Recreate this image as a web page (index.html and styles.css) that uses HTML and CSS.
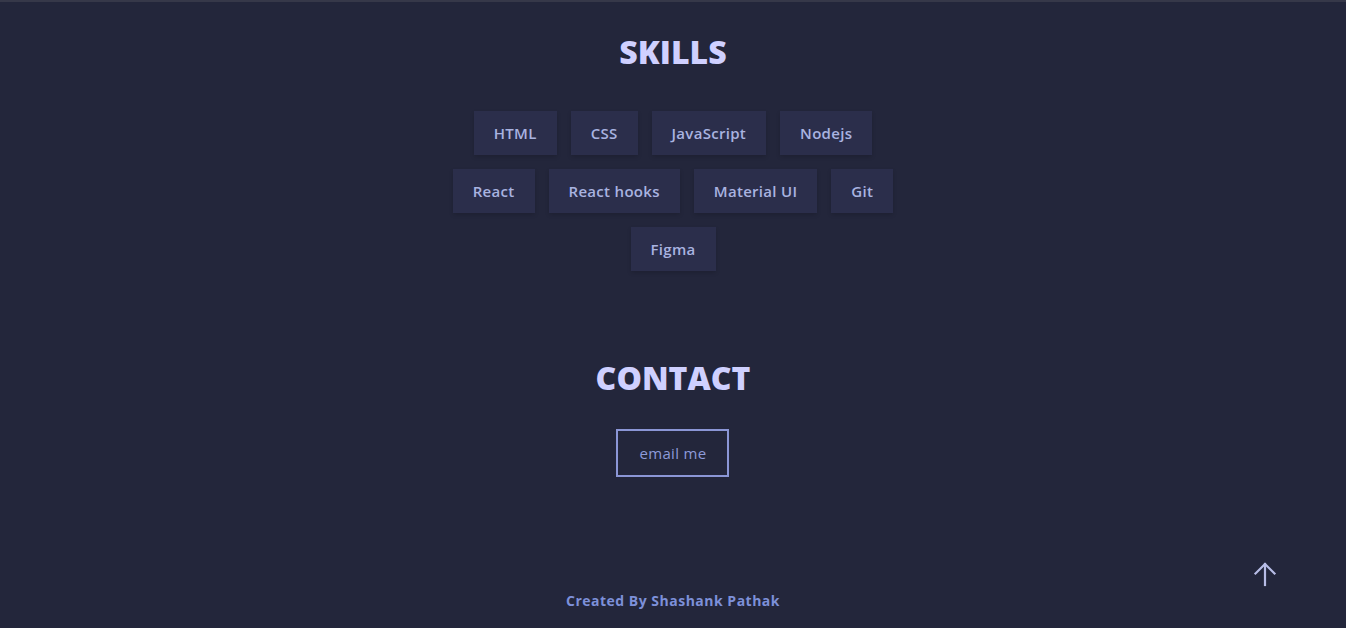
FILE: index.html
```html
<!DOCTYPE html>
<html lang="en">
<head>
<meta charset="utf-8">
<title>Skills</title>
<link rel="stylesheet" href="styles.css">
</head>
<body>
<div class="topbar"></div>
<main class="page">
  <section class="section skills">
    <h2 class="heading">SKILLS</h2>
    <ul class="chips">
      <li class="chip">HTML</li>
      <li class="chip">CSS</li>
      <li class="chip">JavaScript</li>
      <li class="chip">Nodejs</li>
      <li class="chip">React</li>
      <li class="chip">React hooks</li>
      <li class="chip">Material UI</li>
      <li class="chip">Git</li>
      <li class="chip">Figma</li>
    </ul>
  </section>
  <section class="section contact">
    <h2 class="heading">CONTACT</h2>
    <a class="email-btn" href="#">email me</a>
  </section>
  <footer class="footer">
    <span class="credit">Created By Shashank Pathak</span>
  </footer>
</main>
<a class="to-top" href="#" aria-label="Back to top">
  <svg width="26" height="26" viewBox="0 0 26 26" fill="none" stroke="#b7bce6" stroke-width="2.2" stroke-linecap="square">
    <path d="M13 24V3"/>
    <path d="M3.5 12.5L13 3l9.5 9.5"/>
  </svg>
</a>
</body>
</html>
```
FILE: styles.css
```css
* { box-sizing: border-box; }
html, body { margin: 0; padding: 0; }
body {
  background: #23263b;
  font-family: "Open Sans", "Noto Sans", sans-serif;
  color: #a9b3e0;
  height: 628px;
  overflow: hidden;
}
.topbar {
  height: 2px;
  background: #363849;
}
.page {
  display: flex;
  flex-direction: column;
  align-items: center;
}
.section {
  display: flex;
  flex-direction: column;
  align-items: center;
}
.heading {
  margin: 0;
  font-family: "Open Sans", sans-serif;
  font-weight: 800;
  font-size: 32px;
  line-height: 40px;
  color: #cfd0ff;
}
.skills { padding-top: 30px; }
.chips {
  list-style: none;
  margin: 39px 0 0;
  padding: 0;
  width: 450px;
  display: flex;
  flex-wrap: wrap;
  justify-content: center;
  gap: 14px 14px;
}
.chip {
  height: 44px;
  padding: 0 20px;
  display: flex;
  align-items: center;
  background: #2b2e4b;
  box-shadow: 0 2px 4px rgba(0,0,0,0.15);
  font-size: 15px;
  font-weight: 600;
  letter-spacing: 0.3px;
  color: #a9b3e0;
}
.contact { padding-top: 87px; }
.email-btn {
  margin-top: 31px;
  width: 113px;
  height: 48px;
  border: 2px solid #8b96d6;
  display: flex;
  align-items: center;
  justify-content: center;
  font-size: 15px;
  font-weight: 500;
  letter-spacing: 0.3px;
  color: #8d9ad9;
  text-decoration: none;
}
.footer { padding-top: 112px; }
.credit {
  font-size: 14px;
  font-weight: 700;
  letter-spacing: 0.5px;
  color: #7d90d9;
}
.to-top {
  position: fixed;
  left: 1252px;
  top: 561px;
  width: 26px;
  height: 26px;
  display: block;
}
```
